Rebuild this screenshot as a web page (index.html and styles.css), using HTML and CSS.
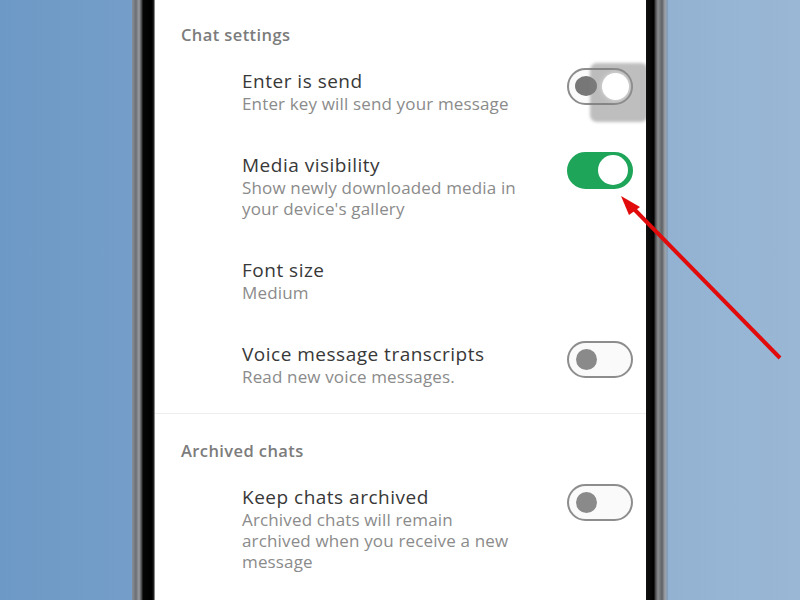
FILE: index.html
```html
<!DOCTYPE html>
<html lang="en">
<head>
    <meta charset="UTF-8">
    <meta name="viewport" content="width=device-width, initial-scale=1.0">
    <title>Chats</title>
    <link rel="stylesheet" href="styles.css">
</head>
<body>
    <div class="stage">
        <div class="phone">
            <div class="bezel bezel-left"></div>
            <div class="screen">
                <div class="group-title">Chat settings</div>

                <div class="row">
                    <div class="text">
                        <div class="title">Enter is send</div>
                        <div class="sub">Enter key will send your message</div>
                    </div>
                    <div class="switch moving">
                        <span class="knob"></span>
                        <span class="knob knob-on"></span>
                    </div>
                    <span class="press"></span>
                </div>

                <div class="row">
                    <div class="text">
                        <div class="title">Media visibility</div>
                        <div class="sub">Show newly downloaded media in<br>your device's gallery</div>
                    </div>
                    <div class="switch on"><span class="knob"></span></div>
                </div>

                <div class="row">
                    <div class="text">
                        <div class="title">Font size</div>
                        <div class="sub">Medium</div>
                    </div>
                </div>

                <div class="row">
                    <div class="text">
                        <div class="title">Voice message transcripts</div>
                        <div class="sub">Read new voice messages.</div>
                    </div>
                    <div class="switch"><span class="knob"></span></div>
                </div>

                <div class="divider"></div>

                <div class="group-title archived">Archived chats</div>

                <div class="row">
                    <div class="text">
                        <div class="title">Keep chats archived</div>
                        <div class="sub">Archived chats will remain<br>archived when you receive a new<br>message</div>
                    </div>
                    <div class="switch"><span class="knob"></span></div>
                </div>
            </div>
            <div class="bezel bezel-right"></div>
        </div>

        <!-- pointer to the media toggle -->
        <svg class="arrow" width="800" height="600" viewBox="0 0 800 600">
            <line x1="780" y1="358" x2="633" y2="208" stroke="#e10b0b" stroke-width="4"/>
            <polygon points="621,196 640,207 629,215" fill="#e10b0b"/>
        </svg>
    </div>
</body>
</html>
```

FILE: styles.css
```css
*{
    margin: 0;
    padding: 0;
    box-sizing: border-box;
}
body{
    width: 800px;
    height: 600px;
    overflow: hidden;
    font-family: "Open Sans", Roboto, sans-serif;
    background: linear-gradient(90deg, #6d99c6 0%, #7ba3cc 30%, #8fafd1 75%, #9ab7d5 100%);
}
.stage{
    position: relative;
    width: 800px;
    height: 600px;
    padding-left: 132px;
}
.phone{
    display: flex;
    height: 600px;
}
.bezel{
    height: 100%;
}
.bezel-left{
    width: 23px;
    background: linear-gradient(90deg, #8a9099 0px, #6b6f74 4px, #9a9ea3 7px, #3a3a3c 10px, #050505 11px, #000 20px, #2a2a2a 22px, #e6e6e6 23px);
}
.bezel-right{
    width: 22px;
    background: linear-gradient(90deg, #111 0px, #000 8px, #3c3c3e 9px, #8a8d90 12px, #5f6265 16px, #9ea3a8 19px, #7f9cbc 22px);
}
.screen{
    width: 491px;
    background: #fff;
    overflow: hidden;
}
.group-title{
    padding: 23px 26px 9px;
    font-size: 16.5px;
    line-height: 24px;
    font-weight: 600;
    letter-spacing: 0.4px;
    color: #7c7c7c;
}
.group-title.archived{
    padding-top: 25px;
}
.row{
    position: relative;
    display: flex;
    align-items: flex-start;
    justify-content: space-between;
    padding: 13px 13px 26px 87px;
}
.title{
    font-size: 19px;
    line-height: 24px;
    font-weight: 500;
    letter-spacing: 0.5px;
    color: #383838;
}
.sub{
    font-size: 17px;
    line-height: 21px;
    letter-spacing: 0.15px;
    color: #8b8b8b;
}
.divider{
    height: 1px;
    background: #eeeeee;
}

/* toggles */
.switch{
    position: relative;
    flex-shrink: 0;
    margin-top: -1px;
    width: 66px;
    height: 37px;
    border: 2.5px solid #8d8d8d;
    border-radius: 19px;
    background: #fafafa;
}
.switch .knob{
    position: absolute;
    left: 7px;
    top: 6px;
    width: 21px;
    height: 21px;
    border-radius: 50%;
    background: #8a8a8a;
}
.switch.on{
    border-color: #1ea55a;
    background: #1ea55a;
}
.switch.on .knob{
    left: 29px;
    top: 1px;
    width: 30px;
    height: 30px;
    background: #fff;
}
.switch.moving .knob{
    left: 6px;
    top: 6px;
    width: 22px;
    height: 20px;
    background: #777;
}
.switch.moving .knob-on{
    z-index: 2;
    left: 33px;
    top: 3px;
    width: 27px;
    height: 27px;
    background: #fff;
    box-shadow: 0 0 5px #e0e0e0;
}
.press{
    position: absolute;
    z-index: 1;
    right: -2px;
    top: 7px;
    width: 58px;
    height: 59px;
    border-radius: 7px;
    background: rgba(125, 125, 125, 0.5);
    filter: blur(1.5px);
}

.arrow{
    position: absolute;
    left: 0;
    top: 0;
}
```
